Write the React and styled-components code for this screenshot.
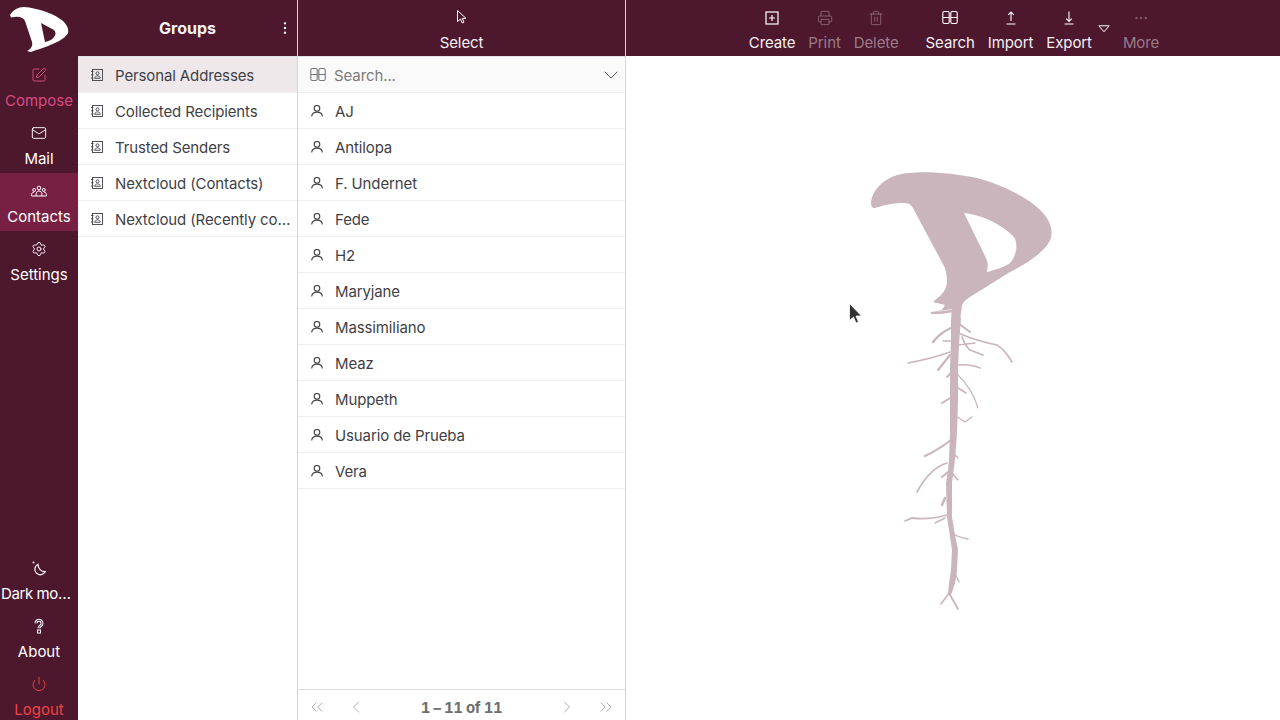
import styled, { createGlobalStyle } from "styled-components";
import {
  SquarePen,
  Mail,
  Settings,
  Power,
  EllipsisVertical,
  Printer,
  Trash2,
  Ellipsis,
  ChevronDown,
  ChevronLeft,
  ChevronRight,
  ChevronsLeft,
  ChevronsRight,
} from "lucide-react";

const GlobalStyle = createGlobalStyle`
  html, body {
    margin: 0;
    height: 100%;
    overflow: hidden;
    background: #fff;
    font-family: Inter, "Liberation Sans", sans-serif;
    font-size: 15px;
  }
  * { box-sizing: border-box; }
`;

const Page = styled.div`
  display: flex;
  height: 720px;
  overflow: hidden;
  position: relative;
`;

const Sidebar = styled.nav`
  width: 78px;
  flex: none;
  height: 720px;
  overflow: hidden;
  background: #4d172e;
  display: flex;
  flex-direction: column;
  justify-content: space-between;
`;

const LogoBox = styled.div`
  height: 57px;
  padding-left: 10px;
  display: flex;
  align-items: flex-start;
`;

const SideGroup = styled.div`
  display: flex;
  flex-direction: column;
  margin-bottom: ${({ $bottom }) => ($bottom ? "-4px" : "0")};
`;

const SideItem = styled.div`
  height: 58px;
  padding-top: 10px;
  display: flex;
  flex-direction: column;
  align-items: center;
  color: ${({ $color }) => $color || "#fff"};
  background: ${({ $active }) => ($active ? "#782044" : "transparent")};
`;

const SideLabel = styled.span`
  margin-top: 8px;
  line-height: 20px;
  white-space: nowrap;
  overflow: hidden;
  text-overflow: ellipsis;
  letter-spacing: ${({ $short }) => ($short ? "-0.4px" : "0")};
  max-width: ${({ $short }) => ($short ? "72px" : "78px")};
  margin-right: ${({ $short }) => ($short ? "4px" : "0")};
`;

const Column = styled.section`
  width: ${({ $width }) => $width}px;
  flex: none;
  display: flex;
  flex-direction: column;
  border-right: 1px solid #d6d6d6;
`;

const HeaderBar = styled.header`
  height: 56px;
  flex: none;
  background: #4d172e;
  color: #fff;
  position: relative;
  display: flex;
  justify-content: center;
  align-items: center;
`;

const GroupsTitle = styled.h2`
  margin: 0;
  font-size: 16px;
  font-weight: 700;
  line-height: 20px;
  color: #f3f3f3;
`;

const MenuDots = styled.span`
  position: absolute;
  right: 4px;
  top: 20px;
  display: flex;
  color: #fff;
`;

const ToolBar = styled.div`
  display: flex;
  gap: 13px;
  padding-left: 2px;
`;

const ToolButton = styled.div`
  display: flex;
  flex-direction: column;
  align-items: center;
  padding-top: 10px;
  height: 56px;
  color: ${({ $off }) => ($off ? "#9b7b89" : "#fff")};
  margin-left: ${({ $space }) => ($space ? "14px" : "0")};
`;

const ToolIcon = styled.span`
  height: 16px;
  display: flex;
  align-items: center;
`;

const ToolLabel = styled.span`
  margin-top: 7px;
  line-height: 20px;
  letter-spacing: -0.1px;
  white-space: nowrap;
  color: ${({ $off }) => ($off ? "#9b7b89" : "#f4f0f2")};
`;

const ExportWrap = styled.div`
  display: flex;
  gap: 6px;
`;

const DropArrow = styled.svg`
  width: 12px;
  height: 8px;
  margin-top: 25px;
`;

const RowList = styled.ul`
  list-style: none;
  margin: 0;
  padding: 0;
  flex: 1;
  border-top: ${({ $topLine }) => ($topLine ? "1px solid #dfe3e8" : "0")};
`;

const Row = styled.li`
  height: 36px;
  display: flex;
  align-items: center;
  gap: 12px;
  padding: 2px 6px 0 13px;
  border-bottom: 1px solid #eeeeee;
  color: #3f3f46;
  letter-spacing: -0.12px;
  background: ${({ $selected }) => ($selected ? "#eee8ea" : "#fff")};

  svg {
    flex: none;
    margin-top: -1px;
  }
`;

const RowText = styled.span`
  white-space: nowrap;
  overflow: hidden;
  text-overflow: ellipsis;
  line-height: 20px;
`;

const SearchRow = styled.div`
  height: 37px;
  flex: none;
  display: flex;
  align-items: center;
  gap: 8px;
  padding: 1px 2px 0 12px;
  border-top: 1px solid #dfe3e8;
  border-bottom: 1px solid #eeeeee;
  background: #fafafa;
  color: #777;
`;

const SearchInput = styled.span`
  flex: 1;
  color: #7b7b7b;
  letter-spacing: -0.1px;
`;

const Pager = styled.footer`
  height: 31px;
  flex: none;
  border-top: 1px solid #dcdcdc;
  display: flex;
  justify-content: space-between;
  align-items: center;
  padding: 4px 9px 0;
  color: #9c9c9c;
`;

const PagerGroup = styled.div`
  display: flex;
  gap: 19px;
  align-items: center;
`;

const PagerText = styled.span`
  font-weight: 700;
  font-size: 15px;
  font-variant-numeric: tabular-nums;
  letter-spacing: -0.5px;
  color: #6f6f6f;
`;

const Viewer = styled.main`
  flex: 1;
  display: flex;
  flex-direction: column;
`;

const ViewerBody = styled.div`
  flex: 1;
  display: flex;
  justify-content: center;
  align-items: center;
`;

const Pointer = styled.svg`
  position: absolute;
  left: 849px;
  top: 303px;
`;

const AddressBook = () => (
  <svg width="12" height="12" viewBox="0 0 12 12" fill="none" stroke="#3f3f46" strokeWidth="0.9">
    <rect x="1.5" y="0.5" width="10" height="11" />
    <circle cx="6.500" cy="4.300" r="1.500" />
    <path d="M3.800 9.300c.2-1.700 1.300-2.400 2.700-2.400s2.500.7 2.700 2.400z" />
    <path d="M0 2.500h2.500M0 5.800h2.500M0 9h2.500" />
  </svg>
);

const PersonIcon = () => (
  <svg width="12" height="12" viewBox="0 0 12 12" fill="none" stroke="#3f3f46" strokeWidth="1.1">
    <circle cx="6" cy="3.300" r="2.800" />
    <path d="M.7 11.500c0-2.800 2.200-4.400 5.300-4.400s5.300 1.600 5.300 4.400" />
  </svg>
);

const Binoculars = ({ color = "currentColor" }) => (
  <svg width="16" height="16" viewBox="0 0 16 16" fill="none" stroke={color} strokeWidth="1.1">
    <rect x="0.8" y="1.500" width="6.400" height="12" rx="1.600" />
    <rect x="8.800" y="1.500" width="6.400" height="12" rx="1.600" />
    <path d="M.8 7.500h6.400M8.800 7.500h6.400" />
  </svg>
);

const PlusBox = () => (
  <svg width="16" height="16" viewBox="0 0 16 16" fill="none" stroke="#fff" strokeWidth="1.2">
    <rect x="2" y="2" width="12" height="12" />
    <path d="M8 5v6M5 8h6" />
  </svg>
);

const ArrowUpLine = () => (
  <svg width="16" height="16" viewBox="0 0 16 16" fill="none" stroke="#fff" strokeWidth="1.1">
    <path d="M8 11V2M5.200 4.800 8 2l2.800 2.800M3.500 14h9" />
  </svg>
);

const ArrowDownLine = () => (
  <svg width="16" height="16" viewBox="0 0 16 16" fill="none" stroke="#fff" strokeWidth="1.1">
    <path d="M8 1.500v10M5.200 8.700 8 11.500l2.800-2.800M3.500 14h9" />
  </svg>
);

const SelectCursor = () => (
  <svg width="16" height="16" viewBox="0 0 16 16" fill="none" stroke="#fff" strokeWidth="1">
    <path d="M3.500.500v11l3-2.500 1.700 4 1.800-.8-1.700-3.800h3.700z" />
  </svg>
);

const PeopleIcon = () => (
  <svg width="16" height="16" viewBox="0 0 16 16" fill="none" stroke="#fff" strokeWidth="1">
    <circle cx="8" cy="5" r="1.800" />
    <circle cx="3.200" cy="7" r="1.500" />
    <circle cx="12.800" cy="7" r="1.500" />
    <path d="M5.200 13v-2.200c0-1.600 1.200-2.800 2.800-2.800s2.800 1.200 2.800 2.800V13z" />
    <path d="M.6 13v-1.500c0-1.300 1-2.300 2.400-2.300M15.400 13v-1.500c0-1.300-1-2.300-2.400-2.300M.6 13h4.600M10.800 13h4.600" />
  </svg>
);

const MoonIcon = () => (
  <svg width="16" height="16" viewBox="0 0 16 16" fill="none" stroke="#fff" strokeWidth="1.2">
    <path d="M7 4.300a5.500 5.500 0 1 0 7.300 7.300 7 7 0 0 1-7.300-7.300z" />
    <circle cx="2.500" cy="2.500" r="1" fill="#fff" stroke="none" />
  </svg>
);

const QuestionIcon = () => (
  <svg width="16" height="16" viewBox="0 0 16 16" fill="none">
    <path d="M5 5.200a3 3 0 1 1 4.600 2.600C8.600 8.500 8 9 8 10.200" stroke="#fff" strokeWidth="3" />
    <path d="M5 5.200a3 3 0 1 1 4.600 2.600C8.600 8.500 8 9 8 10.200" stroke="#4d172e" strokeWidth="1" />
    <rect x="6.500" y="12" width="3" height="3" stroke="#fff" strokeWidth="1" />
  </svg>
);

const LogoMark = () => (
  <svg width="60" height="56" viewBox="10 0 60 56">
    <path
      fillRule="evenodd"
      fill="#fff"
      d="M10 15C13 10 18 7 24 7C38 8 55 14 63 21C67 25 69 29 68 33C63 42 45 47 31 52L27 51C31 49 33 46 32 42L25 21C23 17 18 16 11 17.500Z M41 23L54 30C56 32 56 35 54 37C52 40 49 41 45 42Z"
    />
  </svg>
);

const branches = [
  ["M932 313Q942 313 952 311", 2.6],
  ["M958 323L970 332", 2],
  ["M951 328Q941 332 933 342", 2.4],
  ["M958 333Q977 341 997 345Q1005 350 1012 362", 1.6],
  ["M962 337Q966 347 970 350L983 355", 1.8],
  ["M943 341L952 341", 1.6],
  ["M958 345L975 343", 1.5],
  ["M950 352Q930 359 908 363", 1.5],
  ["M950 355L938 370", 2.2],
  ["M958 365Q970 364 980 368", 1.6],
  ["M952 372L947 377", 2],
  ["M958 375Q972 388 978 408", 1.2],
  ["M958 388L966 393", 1.6],
  ["M952 397L942 403", 2],
  ["M957 417L965 422L972 417", 1.4],
  ["M951 440Q938 450 925 456", 2.2],
  ["M953 453L958 458", 1.4],
  ["M947 463Q930 468 917 492", 1.6],
  ["M948 472L942 477", 2],
  ["M952 473L958 480", 1.5],
  ["M945 498L942 505", 2.4],
  ["M947 515Q930 520 912 518L905 521", 1.8],
  ["M945 518L935 523", 1.4],
  ["M952 533Q957 537 968 539", 1.4],
  ["M955 573L959 582", 1.4],
  ["M949 593L941 604", 1.6],
  ["M949 593L958 609", 1.8],
];

const RootLogo = () => (
  <svg width="200" height="450" viewBox="853 163 200 450">
    <path
      fillRule="evenodd"
      fill="#c9b5bb"
      d="M871 202C872 192 881 180 897 175C915 170 950 172 977 178C1000 184 1030 198 1042 212C1050 220 1053 230 1051 238C1047 250 1030 262 1010 272L970 297C965 300 962 303 961.700 308L960 320L951 320L951.700 309L930 313L942 310L945 305L933 302L941 295C945 291 947 286 947 281C947 276 946 272 945 268L913 208C911 204 908 203 903 203C896 203 887 204 875 208C872 208 871 206 871 202Z M964 213C975 214 990 219 1000 226C1008 231 1013 235 1015 239C1018 246 1016 256 1010 263C1005 267 995 270 987 272C988 266 988 262 986 258Z"
    />
    <path
      fill="#c9b5bb"
      d="M951 318L951 340L950 367L950 400L950 433L949 460L948 470L946 483L947 517L949 530L952 550L951 570L949 583L948 595L951 595L955 583L957 570L958 550L955 535L952 517L952 483L953 475L955 460L957 433L958 400L958 367L959 345L961 318Z"
    />
    {branches.map(([d, w]) => (
      <path key={d} d={d} fill="none" stroke="#c9b5bb" strokeWidth={w} strokeLinecap="round" />
    ))}
  </svg>
);

const navTop = [
  { label: "Compose", icon: <SquarePen size={16} strokeWidth={1.4} />, color: "#d84b7f" },
  { label: "Mail", icon: <Mail size={16} strokeWidth={1.4} /> },
  { label: "Contacts", icon: <PeopleIcon />, active: true },
  { label: "Settings", icon: <Settings size={16} strokeWidth={1.4} /> },
];

const navBottom = [
  { label: "Dark mode", icon: <MoonIcon />, short: true },
  { label: "About", icon: <QuestionIcon /> },
  { label: "Logout", icon: <Power size={16} strokeWidth={1.4} />, color: "#ef4444" },
];

const groups = [
  "Personal Addresses",
  "Collected Recipients",
  "Trusted Senders",
  "Nextcloud (Contacts)",
  "Nextcloud (Recently contacted)",
];

const contacts = [
  "AJ",
  "Antilopa",
  "F. Undernet",
  "Fede",
  "H2",
  "Maryjane",
  "Massimiliano",
  "Meaz",
  "Muppeth",
  "Usuario de Prueba",
  "Vera",
];

const NavEntry = ({ item }) => (
  <SideItem $color={item.color} $active={item.active}>
    {item.icon}
    <SideLabel $short={item.short}>{item.label}</SideLabel>
  </SideItem>
);

const Tool = ({ label, icon, off, space }) => (
  <ToolButton $off={off} $space={space}>
    <ToolIcon>{icon}</ToolIcon>
    <ToolLabel $off={off}>{label}</ToolLabel>
  </ToolButton>
);

export default function App() {
  return (
    <Page>
      <GlobalStyle />
      <Sidebar>
        <SideGroup>
          <LogoBox>
            <LogoMark />
          </LogoBox>
          {navTop.map((item) => (
            <NavEntry key={item.label} item={item} />
          ))}
        </SideGroup>
        <SideGroup $bottom>
          {navBottom.map((item) => (
            <NavEntry key={item.label} item={item} />
          ))}
        </SideGroup>
      </Sidebar>

      <Column $width={220}>
        <HeaderBar>
          <GroupsTitle>Groups</GroupsTitle>
          <MenuDots>
            <EllipsisVertical size={16} strokeWidth={1.6} />
          </MenuDots>
        </HeaderBar>
        <RowList $topLine>
          {groups.map((name, i) => (
            <Row key={name} $selected={i === 0}>
              <AddressBook />
              <RowText>{name}</RowText>
            </Row>
          ))}
        </RowList>
      </Column>

      <Column $width={328}>
        <HeaderBar>
          <Tool label="Select" icon={<SelectCursor />} />
        </HeaderBar>
        <SearchRow>
          <Binoculars color="#777" />
          <SearchInput>Search...</SearchInput>
          <ChevronDown size={24} strokeWidth={0.9} color="#444" />
        </SearchRow>
        <RowList>
          {contacts.map((name) => (
            <Row key={name}>
              <PersonIcon />
              <RowText>{name}</RowText>
            </Row>
          ))}
        </RowList>
        <Pager>
          <PagerGroup>
            <ChevronsLeft size={20} strokeWidth={1} />
            <ChevronLeft size={20} strokeWidth={1} />
          </PagerGroup>
          <PagerText>1 – 11 of 11</PagerText>
          <PagerGroup>
            <ChevronRight size={20} strokeWidth={1} />
            <ChevronsRight size={20} strokeWidth={1} />
          </PagerGroup>
        </Pager>
      </Column>

      <Viewer>
        <HeaderBar>
          <ToolBar>
            <Tool label="Create" icon={<PlusBox />} />
            <Tool label="Print" off icon={<Printer size={16} strokeWidth={1.1} />} />
            <Tool label="Delete" off icon={<Trash2 size={16} strokeWidth={1.1} />} />
            <Tool label="Search" space icon={<Binoculars />} />
            <Tool label="Import" icon={<ArrowUpLine />} />
            <ExportWrap>
              <Tool label="Export" icon={<ArrowDownLine />} />
              <DropArrow viewBox="0 0 12 8" fill="none" stroke="#fff">
                <path d="M.8.800h10.400L6 6.800z" />
              </DropArrow>
            </ExportWrap>
            <Tool label="More" off icon={<Ellipsis size={16} strokeWidth={1.1} />} />
          </ToolBar>
        </HeaderBar>
        <ViewerBody>
          <RootLogo />
        </ViewerBody>
      </Viewer>

      <Pointer width="13" height="22" viewBox="0 0 13 22">
        <path d="M.5.500v17l4-3.500 2.500 6 2.500-1-2.500-6h5.500z" fill="#333" stroke="#fff" strokeWidth=".8" />
      </Pointer>
    </Page>
  );
}
